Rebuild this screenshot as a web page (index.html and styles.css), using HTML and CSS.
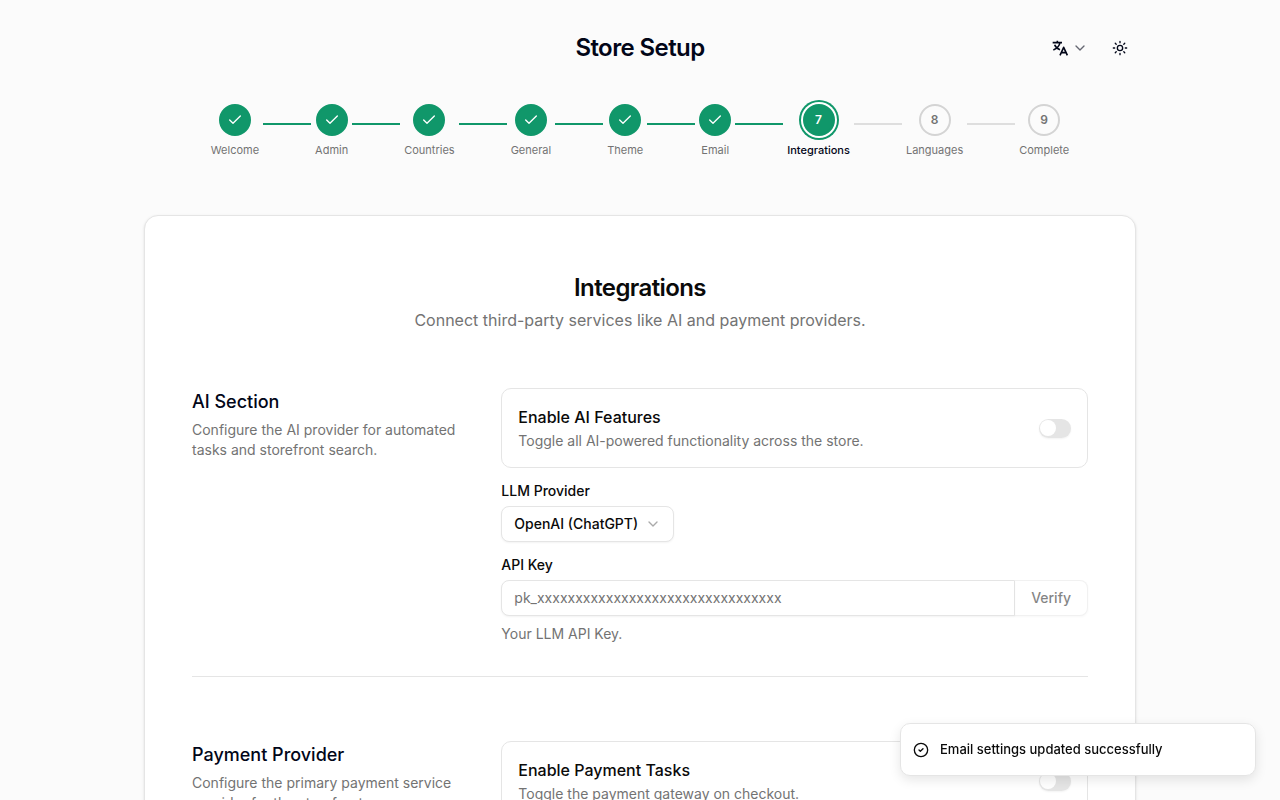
FILE: index.html
```
<!DOCTYPE html>
<html lang="en">
<head>
  <meta charset="UTF-8">
  <meta name="viewport" content="width=device-width, initial-scale=1">
  <title>Store Setup</title>
  <link rel="stylesheet" href="styles.css">
</head>
<body>
  <svg class="sprite" aria-hidden="true">
    <symbol id="check" viewBox="0 0 24 24"><path d="M20 6 9 17l-5-5"/></symbol>
    <symbol id="chevron" viewBox="0 0 24 24"><path d="m6 9 6 6 6-6"/></symbol>
  </svg>
  <div class="page">
    <header class="header">
      <h1 class="title">Store Setup</h1>
      <div class="actions">
        <button class="language" type="button" aria-label="Language">
          <svg class="icon bold" viewBox="0 0 24 24"><path d="M1 4h14M8 1v3M4 7c1 3 4 6 8 7.500M12 4c-1 5-4 8.500-10 11M12 23l5.500-12L23 23M14 19h7"/></svg>
          <svg class="icon faded"><use href="#chevron"/></svg>
        </button>
        <button class="theme" type="button" aria-label="Theme">
          <svg class="icon" viewBox="0 0 24 24"><circle cx="12" cy="12" r="4"/><path d="M12 2v2M12 20v2M4.900 4.900l1.400 1.400M17.700 17.700l1.400 1.400M2 12h2M20 12h2M6.300 17.700l-1.400 1.400M19.100 4.900l-1.400 1.400"/></svg>
        </button>
      </div>
    </header>

    <ol class="steps">
      <li class="step done"><span class="dot"><svg class="icon"><use href="#check"/></svg></span><span>Welcome</span></li>
      <li class="step done"><span class="dot"><svg class="icon"><use href="#check"/></svg></span><span>Admin</span></li>
      <li class="step done"><span class="dot"><svg class="icon"><use href="#check"/></svg></span><span>Countries</span></li>
      <li class="step done"><span class="dot"><svg class="icon"><use href="#check"/></svg></span><span>General</span></li>
      <li class="step done"><span class="dot"><svg class="icon"><use href="#check"/></svg></span><span>Theme</span></li>
      <li class="step done"><span class="dot"><svg class="icon"><use href="#check"/></svg></span><span>Email</span></li>
      <li class="step current" aria-current="step"><span class="dot">7</span><span>Integrations</span></li>
      <li class="step"><span class="dot">8</span><span>Languages</span></li>
      <li class="step"><span class="dot">9</span><span>Complete</span></li>
    </ol>

    <main class="card">
      <div class="intro">
        <h2 class="title">Integrations</h2>
        <p>Connect third-party services like AI and payment providers.</p>
      </div>

      <section class="section">
        <div class="about">
          <h3>AI Section</h3>
          <p>Configure the AI provider for automated tasks and storefront search.</p>
        </div>
        <div class="fields">
          <div class="toggle">
            <div>
              <label for="ai">Enable AI Features</label>
              <p>Toggle all AI-powered functionality across the store.</p>
            </div>
            <input class="switch" id="ai" type="checkbox" role="switch">
          </div>
          <div class="field">
            <label for="provider">LLM Provider</label>
            <div class="select">
              <select id="provider">
                <option>OpenAI (ChatGPT)</option>
              </select>
              <svg class="icon faded"><use href="#chevron"/></svg>
            </div>
          </div>
          <div class="field">
            <label for="key">API Key</label>
            <div class="group">
              <input id="key" type="text" placeholder="pk_xxxxxxxxxxxxxxxxxxxxxxxxxxxxxxxx">
              <button type="button" disabled>Verify</button>
            </div>
            <p>Your LLM API Key.</p>
          </div>
        </div>
      </section>

      <section class="section">
        <div class="about">
          <h3>Payment Provider</h3>
          <p>Configure the primary payment service provider for the storefront.</p>
        </div>
        <div class="fields">
          <div class="toggle">
            <div>
              <label for="payment">Enable Payment Tasks</label>
              <p>Toggle the payment gateway on checkout.</p>
            </div>
            <input class="switch" id="payment" type="checkbox" role="switch">
          </div>
        </div>
      </section>
    </main>
  </div>

  <div class="toast" role="status">
    <svg class="icon" viewBox="0 0 24 24"><circle cx="12" cy="12" r="10"/><path d="m9 12 2 2 4-4"/></svg>
    <span>Email settings updated successfully</span>
  </div>
</body>
</html>
```
FILE: styles.css
```
* {
  box-sizing: border-box;
}
html {
  scrollbar-width: none;
}
body {
  margin: 0;
  background: #fbfbfb;
  color: #0a0a0a;
  font: 14px/20px Inter, sans-serif;
}
h1, h2, h3, p, ol {
  margin: 0;
  padding: 0;
}
p {
  color: #737373;
}
button, input, select {
  margin: 0;
  font: inherit;
  color: inherit;
}
.sprite {
  display: none;
}
.icon {
  width: 16px;
  height: 16px;
  flex: none;
  fill: none;
  stroke: currentColor;
  stroke-width: 2;
  stroke-linecap: round;
  stroke-linejoin: round;
}
.bold {
  stroke-width: 2.4;
  stroke-linecap: butt;
}
.faded {
  opacity: .6;
}
.page {
  max-width: 1024px;
  margin: 0 auto;
  padding: 24px 16px;
}
.title {
  font-size: 24px;
  line-height: 32px;
  font-weight: 600;
  letter-spacing: -0.025em;
}

/* header */
.header {
  display: grid;
  grid-template-columns: 1fr auto 1fr;
  align-items: center;
  height: 48px;
  color: #020618;
}
.actions {
  grid-column: 3;
  justify-self: end;
  display: flex;
  gap: 8px;
}
.header .title {
  grid-column: 2;
}
.actions button {
  display: flex;
  align-items: center;
  gap: 4px;
  height: 32px;
  padding: 0 8px;
  border: 0;
  background: none;
}

/* steps */
.steps {
  display: flex;
  justify-content: center;
  gap: 56px;
  margin-top: 32px;
  list-style: none;
}
.step {
  position: relative;
  display: flex;
  flex-direction: column;
  align-items: center;
  gap: 6px;
  color: #737373;
  font-size: 11px;
  line-height: 16px;
}
/* connector to the next step */
.step:not(:last-child)::after {
  content: "";
  position: absolute;
  top: 19px;
  left: calc(100% + 4px);
  width: 48px;
  height: 2px;
  background: #dedede;
}
.step.done::after {
  background: #10976a;
}
.dot {
  display: flex;
  align-items: center;
  justify-content: center;
  width: 32px;
  height: 32px;
  border: 2px solid #d4d4d4;
  border-radius: 50%;
  font-size: 12px;
  font-weight: 600;
}
.done .dot,
.current .dot {
  border-color: #10976a;
  background: #10976a;
  color: #fff;
}
.current {
  color: #020618;
  font-weight: 500;
}
.current .dot {
  box-shadow: 0 0 0 2px #fff, 0 0 0 4px #10976a;
}

/* card */
.card {
  margin-top: 57px;
  padding: 56px 47px 48px;
  border: 1px solid #e5e5e5;
  border-radius: 14px;
  background: #fff;
  box-shadow: 0 1px 3px rgba(0, 0, 0, .1), 0 1px 2px -1px rgba(0, 0, 0, .1);
}
.intro {
  margin-bottom: 56px;
  text-align: center;
}
.intro p {
  margin-top: 4px;
  font-size: 16px;
  line-height: 24px;
}
.section {
  display: grid;
  grid-template-columns: repeat(3, 1fr);
  gap: 32px;
}
.section + .section {
  margin-top: 32px;
  padding-top: 64px;
  border-top: 1px solid #e5e5e5;
}
.about h3 {
  color: #020618;
  font-size: 18px;
  line-height: 28px;
  font-weight: 500;
}
.about p {
  margin-top: 4px;
}
.fields {
  grid-column: span 2;
  display: grid;
  gap: 16px;
}
.toggle {
  display: flex;
  align-items: center;
  justify-content: space-between;
  padding: 16px;
  border: 1px solid #e5e5e5;
  border-radius: 10px;
}
.toggle label {
  display: block;
  margin-bottom: 2px;
  font-size: 16px;
  line-height: 24px;
  font-weight: 500;
}
.switch {
  appearance: none;
  display: flex;
  align-items: center;
  width: 32px;
  height: 19px;
  padding: 1px;
  border-radius: 10px;
  background: #e5e5e5;
  box-shadow: 0 1px 2px rgba(0, 0, 0, .05);
}
.switch::before {
  content: "";
  width: 16px;
  height: 16px;
  border-radius: 50%;
  background: #fff;
}
.switch:checked {
  justify-content: flex-end;
  background: #10976a;
}
.field {
  display: grid;
  gap: 8px;
}
.field label {
  line-height: 14px;
  font-weight: 500;
}
.select {
  display: grid;
  align-items: center;
  justify-items: end;
  justify-self: start;
}
.select > * {
  grid-area: 1 / 1;
}
.select select {
  appearance: none;
  height: 36px;
  padding: 0 35px 0 12px;
  border: 1px solid #e5e5e5;
  border-radius: 8px;
  background: #fff;
  font-weight: 500;
  box-shadow: 0 1px 2px rgba(0, 0, 0, .05);
}
.select .icon {
  margin-right: 13px;
  color: #737373;
  pointer-events: none;
}
.group {
  display: flex;
}
.group input {
  flex: 1;
  min-width: 0;
  height: 36px;
  padding: 0 12px 1px;
  border: 1px solid #e5e5e5;
  border-radius: 8px 0 0 8px;
  background: #fff;
  box-shadow: 0 1px 2px rgba(0, 0, 0, .05);
}
.group input::placeholder {
  color: #737373;
}
.group button {
  padding: 0 16px;
  border: 1px solid #e5e5e5;
  border-left: 0;
  border-radius: 0 8px 8px 0;
  background: #fff;
  font-weight: 500;
  box-shadow: 0 1px 2px rgba(0, 0, 0, .05);
}
.group button:disabled {
  opacity: .5;
}

/* toast */
.toast {
  position: fixed;
  right: 24px;
  bottom: 24px;
  display: flex;
  align-items: center;
  gap: 11px;
  width: 356px;
  padding: 16px 12px;
  border: 1px solid #e5e5e5;
  border-radius: 10px;
  background: #fff;
  font-size: 13px;
  line-height: 19px;
  font-weight: 500;
  box-shadow: 0 4px 12px rgba(0, 0, 0, .1);
}
```
